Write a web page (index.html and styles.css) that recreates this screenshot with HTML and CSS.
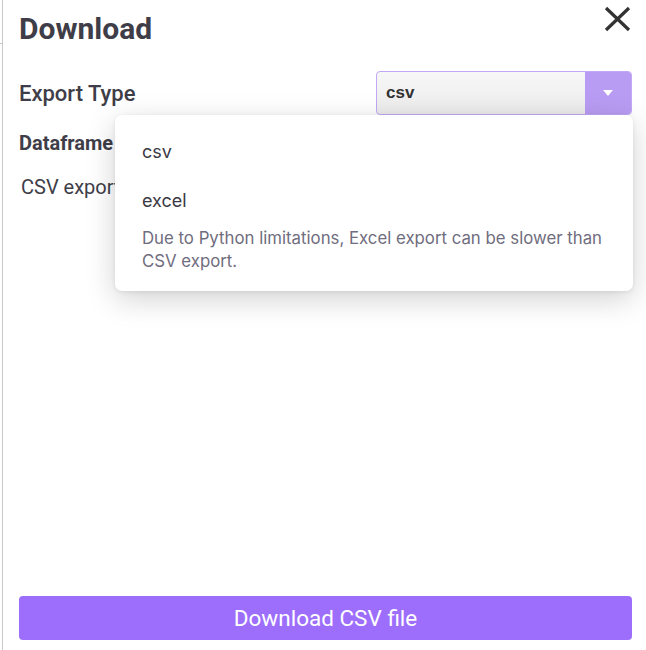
FILE: index.html
```html
<!DOCTYPE html>
<html>
<head>
<meta charset="utf-8">
<link rel="stylesheet" href="styles.css">
</head>
<body>
<div class="frame">
  <div class="edge"><span class="edge-tick"></span></div>
  <div class="panel">
    <div class="header">
      <h1 class="title">Download</h1>
      <button class="close" aria-label="Close">
        <svg width="27" height="26" viewBox="0 0 27 26"><path d="M2 2 L25 24 M25 2 L2 24" stroke="#333" stroke-width="3.2" stroke-linecap="butt"/></svg>
      </button>
    </div>
    <div class="row">
      <div class="label">Export Type</div>
      <div class="select-wrap">
        <div class="select">
          <span class="select-value">csv</span>
          <span class="select-arrow"><svg width="10" height="6" viewBox="0 0 10 6"><path d="M0 0 H10 L5 6 Z" fill="#fff"/></svg></span>
        </div>
        <div class="menu">
          <div class="option">csv</div>
          <div class="option option-excel">excel</div>
          <div class="option-desc">Due to Python limitations, Excel export can be slower than CSV export.</div>
        </div>
      </div>
    </div>
    <div class="label label-df">Dataframe Size</div>
    <div class="note">CSV export is the fastest option.</div>
    <div class="spacer"></div>
    <button class="download">Download CSV file</button>
  </div>
</div>
</body>
</html>
```

FILE: styles.css
```css
* { box-sizing: border-box; }
html, body { margin: 0; padding: 0; background: #fff; }
body { font-family: Roboto, "Liberation Sans", sans-serif; }
.frame { display: flex; height: 650px; width: 646px; overflow: hidden; }
.edge { width: 3px; border-right: 1px solid #c8c8c8; position: relative; flex: none; }
.edge-tick { position: absolute; left: 0; top: 43px; width: 2px; height: 1px; background: #c8c8c8; }
.panel { flex: 1; display: flex; flex-direction: column; padding: 0 14px 10px 16px; }
.header { display: flex; justify-content: space-between; align-items: flex-start; height: 58px; }
.title { margin: 11px 0 0 0; font-size: 30px; font-weight: 700; color: #3e3d48; line-height: 36px; }
.close { border: 0; background: none; padding: 0; margin: 5px 0 0 0; width: 29px; height: 28px; display: flex; align-items: center; justify-content: center; }
.row { display: flex; justify-content: space-between; align-items: center; height: 44px; margin-top: 13px; }
.label { font-size: 22px; font-weight: 500; color: #3e3d48; }
.select-wrap { position: relative; width: 256px; height: 44px; }
.select { display: flex; height: 44px; border: 1px solid #c2a8f5; border-radius: 4px; overflow: hidden; background: linear-gradient(#f7f7f7, #ececec); }
.select-value { flex: 1; padding-left: 9px; display: flex; align-items: center; font-family: "Liberation Sans", Arial, sans-serif; font-weight: 700; font-size: 17px; color: #333; }
.select-arrow { width: 46px; background: #b89cf3; display: flex; align-items: center; justify-content: center; }
.menu { position: absolute; top: 44px; right: -1px; width: 518px; background: #fff; border-radius: 7px; box-shadow: 0 8px 30px rgba(0,0,0,0.18), 0 1px 4px rgba(0,0,0,0.08); padding: 25px 27px 18px 27px; font-family: Inter, "Noto Sans", sans-serif; z-index: 5; }
.option { font-size: 18px; color: #3a3944; line-height: 24px; }
.option-excel { margin-top: 25px; }
.option-desc { margin-top: 14px; font-size: 16.8px; line-height: 23px; color: #6f6d7e; }
.label-df { margin-top: 16px; font-size: 20px; font-weight: 700; }
.note { margin-top: 20px; margin-left: 2px; font-size: 20px; color: #3e3d48; }
.spacer { flex: 1; }
.download { height: 44px; border: 0; border-radius: 4px; background: #9d6efb; color: #fff; font-family: Roboto, sans-serif; font-size: 22.5px; width: 100%; }
```
